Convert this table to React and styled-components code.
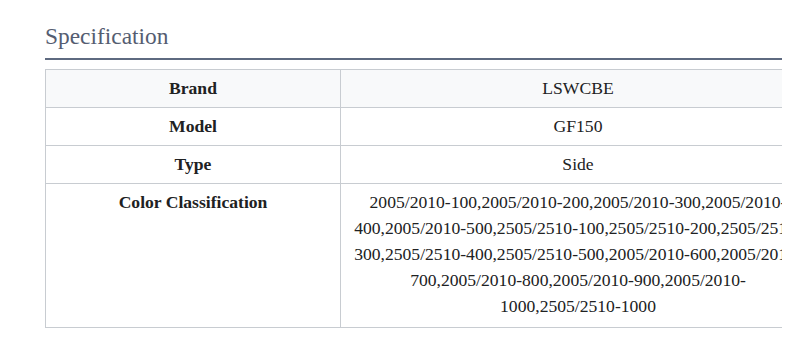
import React from "react";
import styled, { createGlobalStyle } from "styled-components";

const Global = createGlobalStyle`
  html, body { margin: 0; padding: 0; background: #fff; }
  body { font-family: "Liberation Serif", "Times New Roman", serif; color: #202122; }
`;

const Page = styled.div`
  padding: 23px 0 0 45px;
`;

const Section = styled.section`
  width: 737px;
  overflow: hidden;
`;

const Heading = styled.h2`
  margin: 0 0 9px 0;
  padding: 0 0 9px 0;
  font-family: "Liberation Serif", "Times New Roman", serif;
  font-weight: normal;
  font-size: 23.4px;
  line-height: 26px;
  color: #555d71;
  border-bottom: 2px solid #5e6a80;
`;

const Table = styled.table`
  width: 770px;
  table-layout: fixed;
  border-collapse: collapse;
  font-size: 17.6px;
  line-height: 26px;
`;

const Col = styled.col`
  width: ${(p) => p.$w}px;
`;

const Row = styled.tr`
  background: ${(p) => (p.$shaded ? "#f8f9fa" : "#fff")};
`;

const Label = styled.th`
  border: 1px solid #c8ccd1;
  padding: ${(p) => (p.$tall ? "5px 8px 8px" : "5px 8px 6px")};
  text-align: center;
  vertical-align: top;
  font-weight: bold;
  color: #202122;
`;

const Value = styled.td`
  border: 1px solid #c8ccd1;
  padding: ${(p) => (p.$tall ? "5px 8px 8px" : "5px 8px 6px")};
  text-align: center;
  vertical-align: top;
  color: #202122;
  white-space: nowrap;
`;

const rows = [
  { label: "Brand", lines: ["LSWCBE"] },
  { label: "Model", lines: ["GF150"] },
  { label: "Type", lines: ["Side"] },
  {
    label: "Color Classification",
    lines: [
      "2005/2010-100,2005/2010-200,2005/2010-300,2005/2010-",
      "400,2005/2010-500,2505/2510-100,2505/2510-200,2505/2510-",
      "300,2505/2510-400,2505/2510-500,2005/2010-600,2005/2010-",
      "700,2005/2010-800,2005/2010-900,2005/2010-",
      "1000,2505/2510-1000",
    ],
  },
];

export default function App() {
  return (
    <>
      <Global />
      <Page>
        <Section>
          <Heading>Specification</Heading>
          <Table>
            <colgroup>
              <Col $w={295} />
              <Col $w={475} />
            </colgroup>
            <tbody>
              {rows.map((r, i) => {
                const tall = r.lines.length > 1;
                return (
                  <Row key={r.label} $shaded={i === 0}>
                    <Label $tall={tall}>{r.label}</Label>
                    <Value $tall={tall}>
                      {r.lines.map((l, j) => (
                        <React.Fragment key={j}>
                          {j > 0 && <br />}
                          {l}
                        </React.Fragment>
                      ))}
                    </Value>
                  </Row>
                );
              })}
            </tbody>
          </Table>
        </Section>
      </Page>
    </>
  );
}
